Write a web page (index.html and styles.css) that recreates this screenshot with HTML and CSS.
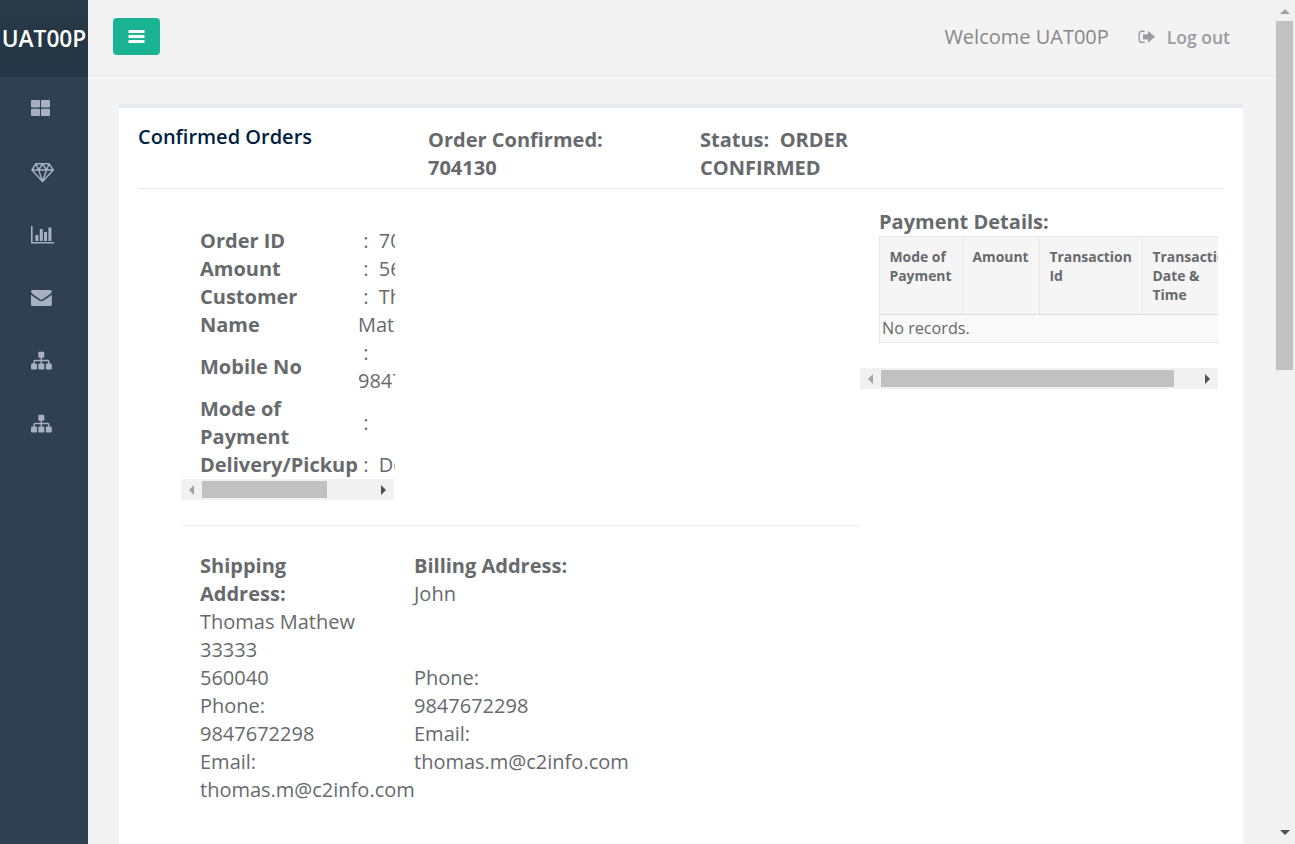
FILE: index.html
```html
<!DOCTYPE html>
<html lang="en">
<head>
<meta charset="utf-8">
<title>Confirmed Orders</title>
<link rel="stylesheet" href="styles.css">
</head>
<body>
<div class="app">
  <nav class="sidebar">
    <div class="brand"><span>UAT00P</span></div>
    <ul class="menu">
      <li><svg width="24" height="22" viewBox="0 0 24 22"><g fill="currentColor"><rect x="0" y="3" width="9" height="7.5" rx="1.3"/><rect x="10" y="3" width="9" height="7.5" rx="1.3"/><rect x="0" y="11.7" width="9" height="7.3" rx="1.3"/><rect x="10" y="11.7" width="9" height="7.3" rx="1.3"/></g></svg></li>
      <li><svg width="24" height="22" viewBox="0 0 24 22"><path d="M5 2.7H18L22.3 9L11.5 20.4L.9 9ZM1 9H22M5 2.7L7.6 9L11.5 20L15.6 9L18 2.7M7.6 9L11.5 3L15.6 9" fill="none" stroke="currentColor" stroke-width="1.4" stroke-linejoin="round"/></svg></li>
      <li><svg width="24" height="22" viewBox="0 0 24 22"><path d="M0 2H1.6V18H23V19.6H0ZM4.4 11H7.4V17H4.4ZM8.8 5H11.8V17H8.8ZM13 8H16V17H13ZM17.4 3.5H20.4V17H17.4Z" fill="currentColor"/></svg></li>
      <li><svg width="24" height="22" viewBox="0 0 24 22"><path d="M0 5V4.6C0 3.6.8 3 1.8 3H19C20 3 20.8 3.6 20.8 4.6V5C20 7 14.5 10 12.3 12C11 13 9.8 13 8.5 12C6.3 10 .8 7 0 5ZM0 7.5C2 9.6 5 11.3 7.7 13.3C9.6 14.7 11.2 14.7 13.1 13.3C15.8 11.3 18.8 9.6 20.8 7.5V17.4C20.8 18.4 20 19 19 19H1.8C.8 19 0 18.4 0 17.4Z" fill="currentColor"/></svg></li>
      <li><svg width="24" height="22" viewBox="0 0 24 22"><g fill="currentColor"><rect x="7.3" y="1.7" width="6" height="6" rx="1.2"/><rect x="0" y="13.5" width="6" height="6" rx="1.2"/><rect x="7.3" y="13.5" width="6" height="6" rx="1.2"/><rect x="14.8" y="13.5" width="6" height="6" rx="1.2"/></g><path d="M10.3 7V14M3 14V11.5Q3 10.5 4 10.5H16.8Q17.8 10.5 17.8 11.5V14" fill="none" stroke="currentColor" stroke-width="1.4"/></svg></li>
      <li><svg width="24" height="22" viewBox="0 0 24 22"><g fill="currentColor"><rect x="7.3" y="1.7" width="6" height="6" rx="1.2"/><rect x="0" y="13.5" width="6" height="6" rx="1.2"/><rect x="7.3" y="13.5" width="6" height="6" rx="1.2"/><rect x="14.8" y="13.5" width="6" height="6" rx="1.2"/></g><path d="M10.3 7V14M3 14V11.5Q3 10.5 4 10.5H16.8Q17.8 10.5 17.8 11.5V14" fill="none" stroke="currentColor" stroke-width="1.4"/></svg></li>
    </ul>
  </nav>

  <main class="page">
    <header class="topbar">
      <button class="toggle" aria-label="Toggle menu"><svg width="17" height="14" viewBox="0 0 17 14"><path d="M.5 1H16.5V4H.5ZM.5 6H16.5V9H.5ZM.5 11H16.5V14H.5Z" fill="#fff"/></svg></button>
      <span class="welcome">Welcome UAT00P</span>
      <a class="logout"><svg width="18" height="14" viewBox="0 0 18 14"><path d="M6.5 1.3H3.6Q1.2 1.3 1.2 3.7V9.9Q1.2 12.3 3.6 12.3H6.5" fill="none" stroke="currentColor" stroke-width="1.4"/><path d="M5 4.2H10V.8L17 6.8L10 12.8V9.4H5Z" fill="currentColor"/></svg><span>Log out</span></a>
    </header>

    <section class="card">
      <div class="card-head">
        <h5>Confirmed Orders</h5>
        <div class="head-number">Order Confirmed:<br>704130</div>
        <div class="head-status">Status:&nbsp; ORDER<br>CONFIRMED</div>
      </div>
      <div class="card-body">
        <div class="details">
          <div class="order-scroll">
            <div class="order-table">
              <b>Order ID</b><span>&nbsp;:&nbsp; 704130</span>
              <b>Amount</b><span>&nbsp;:&nbsp; 560</span>
              <b>Customer<br>Name</b><span>&nbsp;:&nbsp; Thomas<br>Mathew</span>
              <b>Mobile No</b><span>&nbsp;:<br>9847672298</span>
              <b>Mode of<br>Payment</b><span>&nbsp;:</span>
              <b>Delivery/Pickup</b><span>&nbsp;:&nbsp; Delivery</span>
            </div>
            <div class="hbar"><i class="arrow left"></i><i class="thumb order-thumb"></i><i class="arrow right"></i></div>
          </div>
          <div class="addresses">
            <div class="shipping"><b>Shipping<br>Address:</b><br>Thomas Mathew<br>33333<br>560040<br>Phone:<br>9847672298<br>Email:<br>thomas.m@c2info.com</div>
            <div class="billing"><b>Billing Address:</b><br>John<br><br><br>Phone:<br>9847672298<br>Email:<br>thomas.m@c2info.com</div>
          </div>
        </div>
        <div class="payment">
          <h4>Payment Details:</h4>
          <div class="pay-clip">
            <table class="pay-table">
              <thead><tr><th class="c1">Mode of<br>Payment</th><th class="c2">Amount</th><th class="c3">Transaction<br>Id</th><th class="c4">Transaction<br>Date &amp;<br>Time</th></tr></thead>
              <tbody><tr><td colspan="4">No records.</td></tr></tbody>
            </table>
          </div>
          <div class="hbar"><i class="arrow left"></i><i class="thumb pay-thumb"></i><i class="arrow right"></i></div>
        </div>
      </div>
    </section>
  </main>

  <div class="vbar"><i class="arrow up"></i><i class="vthumb"></i><i class="arrow down"></i></div>
</div>
</body>
</html>
```

FILE: styles.css
```css
* { box-sizing: border-box; }
body {
  margin: 0;
  overflow: hidden;
  background: #f3f3f3;
  color: #676a6c;
  font: 20px/28px "Open Sans", "Noto Sans", sans-serif;
}
svg { display: block; flex: none; }
b { font-weight: 700; }
.app { display: flex; width: 1295px; height: 844px; overflow: hidden; }

.sidebar { width: 88px; flex: none; background: #2f4050; }
.brand {
  height: 77px;
  display: flex;
  align-items: center;
  justify-content: center;
  background: linear-gradient(#293b49, #253644 50%, #263847);
  color: #fff;
  font-size: 22.7px;
  font-weight: 600;
  white-space: nowrap;
}
.brand span { line-height: 27px; padding-bottom: 1px; }
.menu { list-style: none; margin: 0; padding: 0 0 0 31px; color: #a7b1c2; }
.menu li { height: 63px; display: flex; align-items: center; }
.menu li:first-child { height: 62px; margin-bottom: 1.5px; }

.page { flex: 1; min-width: 0; background: #f3f3f3; }
.topbar {
  height: 76px;
  padding: 18px 44px 0 25px;
  display: flex;
  align-items: flex-start;
  border-bottom: 1px solid #e7e7e7;
  color: #888;
}
.toggle {
  width: 47px;
  height: 37px;
  padding: 0 0 2px 15px;
  border: 0;
  border-radius: 4px;
  background: #1ab394;
}
.welcome { margin: 5px 29px 0 auto; }
.logout { display: flex; align-items: center; gap: 11px; margin-top: 5px; color: #999c9e; font-weight: 600; font-size: 17.5px; }

.card {
  width: 1124px;
  height: 740px;
  margin: 28px 0 0 31px;
  padding: 0 19px;
  border-top: 4px solid #e7eaec;
  background: #fff;
}
.card-head {
  height: 81px;
  padding-top: 18px;
  display: grid;
  grid-template-columns: 290px 272px 1fr;
  border-bottom: 1px solid #e7eaec;
  font-weight: 700;
}
.card-head h5 { margin: -3px 0 0; font-size: 20px; font-weight: 600; color: #001f3f; }

.card-body { display: flex; }
.details { width: 722px; flex: none; padding-left: 43px; }
.order-scroll { width: 214px; padding-top: 38px; overflow: hidden; }
.order-table {
  display: grid;
  grid-template-columns: 158px 120px;
  align-items: center;
  padding-left: 19px;
  white-space: nowrap;
}
.hbar { display: flex; align-items: center; height: 21px; background: #f1f1f1; }
.order-scroll .hbar { width: 213px; }
.thumb { height: 17px; background: #c1c1c1; }
.order-thumb { width: 125px; }
.pay-thumb { width: 293px; }
.arrow { width: 0; height: 0; border: 5px solid transparent; }
.left { border-right-color: #a3a3a3; border-left: 0; margin: 0 8px; }
.right { border-left-color: #505050; border-right: 0; margin: 0 8px 0 auto; }

.addresses {
  margin-top: 25px;
  padding: 26px 0 0 19px;
  display: grid;
  grid-template-columns: 214px 1fr;
  border-top: 1px solid #eee;
  white-space: nowrap;
}

.payment { width: 358px; padding-top: 19px; }
.payment h4 { margin: 0 0 0 19px; font-size: 20px; font-weight: 700; }
.pay-clip { height: 132px; padding-left: 19px; overflow: hidden; }
.pay-table {
  width: 420px;
  table-layout: fixed;
  border-collapse: collapse;
  border: 1px solid #e7e7e7;
}
.pay-table th {
  height: 78px;
  padding: 10px 0 0 9.5px;
  border: 1px solid #e7e7e7;
  border-bottom-color: #ddd;
  background: #f5f5f6;
  vertical-align: top;
  text-align: left;
  font-size: 13.9px;
  line-height: 19px;
}
.pay-table td { height: 28px; padding: 0 0 0 2px; background: #f9f9f9; font-size: 16.2px; line-height: 27px; }
.c1 { width: 83px; }
.c2 { width: 77px; }
.c3 { width: 103px; }

.vbar {
  width: 21px;
  flex: none;
  padding: 9px 0;
  display: flex;
  flex-direction: column;
  align-items: center;
  background: #f1f1f1;
}
.vthumb { width: 17px; height: 349px; margin: 7px 0 auto 0; background: #c1c1c1; }
.up { border-bottom-color: #a3a3a3; border-top: 0; }
.down { border-top-color: #505050; border-bottom: 0; }
```
